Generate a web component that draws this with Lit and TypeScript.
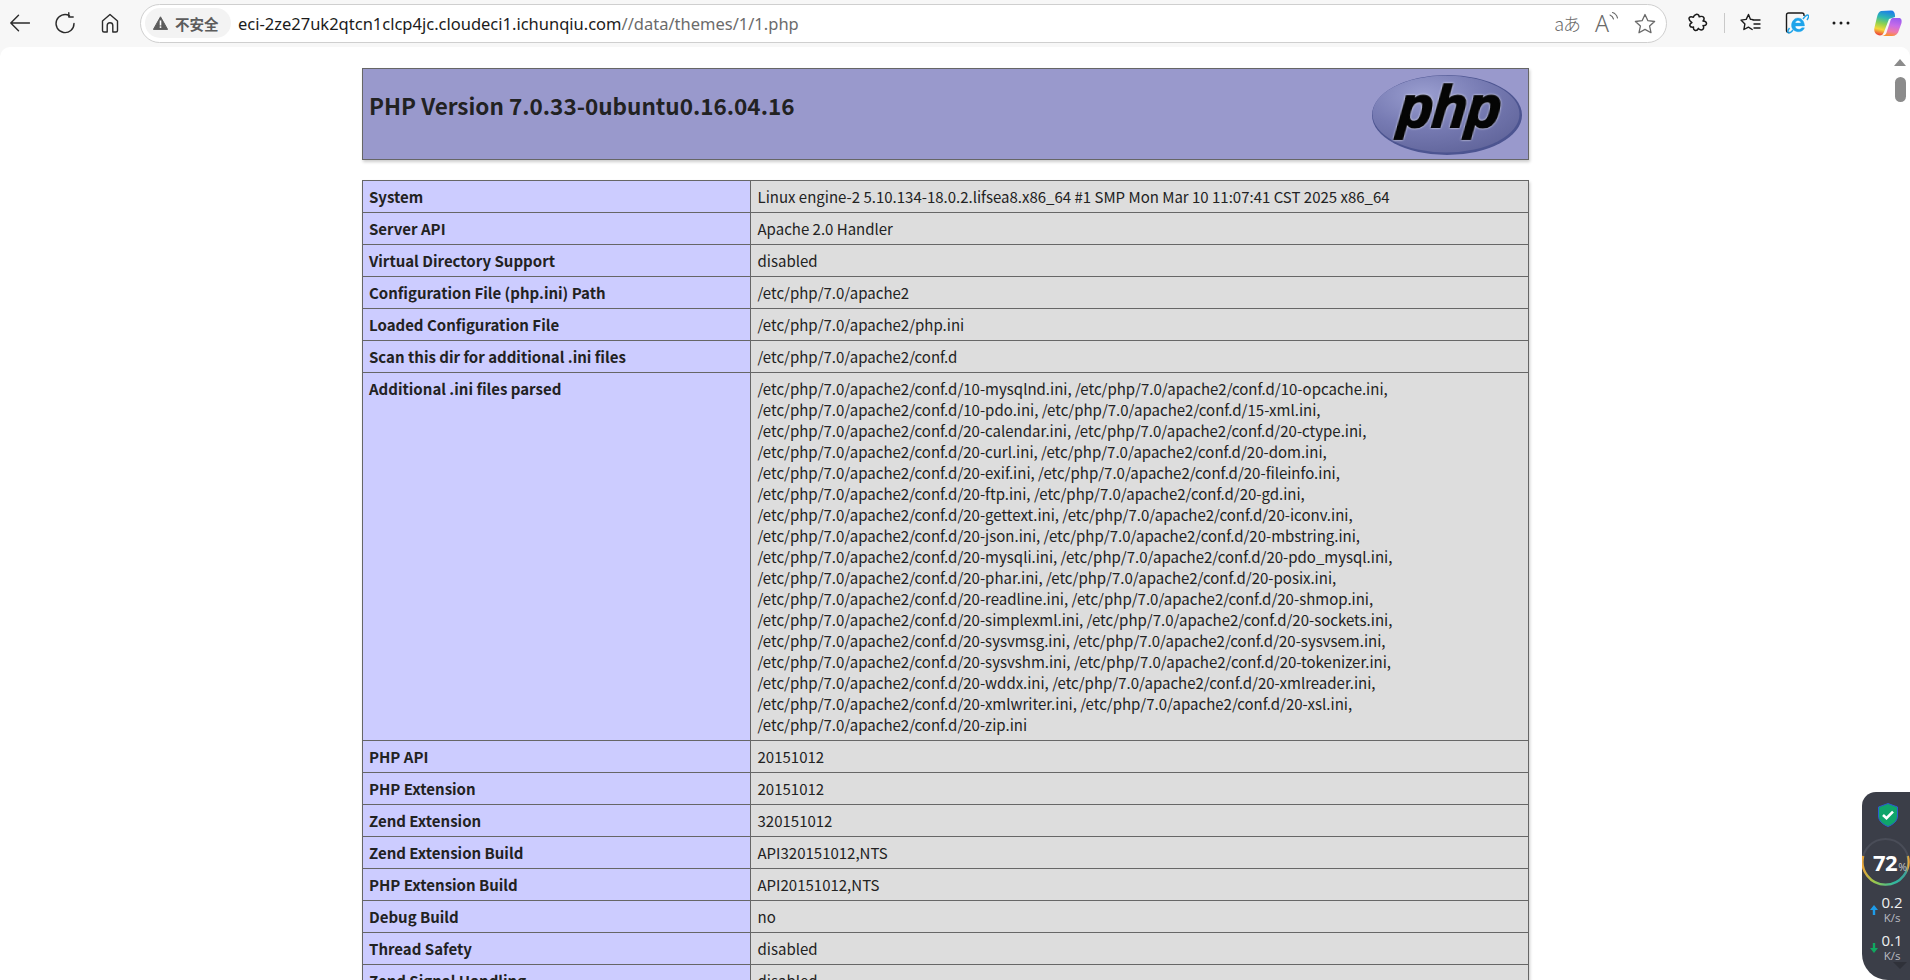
import { LitElement, html, css } from "lit";
import { customElement } from "lit/decorators.js";

const d = "/etc/php/7.0/apache2/conf.d/";
const pairs: string[][] = [
  ["10-mysqlnd", "10-opcache"], ["10-pdo", "15-xml"], ["20-calendar", "20-ctype"], ["20-curl", "20-dom"],
  ["20-exif", "20-fileinfo"], ["20-ftp", "20-gd"], ["20-gettext", "20-iconv"], ["20-json", "20-mbstring"],
  ["20-mysqli", "20-pdo_mysql"], ["20-phar", "20-posix"], ["20-readline", "20-shmop"], ["20-simplexml", "20-sockets"],
  ["20-sysvmsg", "20-sysvsem"], ["20-sysvshm", "20-tokenizer"], ["20-wddx", "20-xmlreader"], ["20-xmlwriter", "20-xsl"],
];
const iniLines = [...pairs.map(([a, b]) => `${d}${a}.ini, ${d}${b}.ini,`), `${d}20-zip.ini`];

const rowsA: [string, string][] = [
  ["System", "Linux engine-2 5.10.134-18.0.2.lifsea8.x86_64 #1 SMP Mon Mar 10 11:07:41 CST 2025 x86_64"],
  ["Server API", "Apache 2.0 Handler"],
  ["Virtual Directory Support", "disabled"],
  ["Configuration File (php.ini) Path", "/etc/php/7.0/apache2"],
  ["Loaded Configuration File", "/etc/php/7.0/apache2/php.ini"],
  ["Scan this dir for additional .ini files", "/etc/php/7.0/apache2/conf.d"],
];
const rowsB: [string, string][] = [
  ["PHP API", "20151012"],
  ["PHP Extension", "20151012"],
  ["Zend Extension", "320151012"],
  ["Zend Extension Build", "API320151012,NTS"],
  ["PHP Extension Build", "API20151012,NTS"],
  ["Debug Build", "no"],
  ["Thread Safety", "disabled"],
  ["Zend Signal Handling", "disabled"],
];

@customElement("app-root")
export class AppRoot extends LitElement {
  static styles = css`
    :host { display: block; width: 1910px; height: 980px; overflow: hidden; position: relative; background: #f7f7f7; }
    .chrome { height: 47px; display: flex; align-items: center; background: #f7f7f7; box-sizing: border-box; padding-bottom: 1px; }
    .nav { display: flex; width: 140px; flex: none; align-items: center; }
    .nav svg { display: block; }
    .nav .b { width: 20px; margin-left: 10px; }
    .nav .r { width: 22px; margin-left: 24px; }
    .nav .h { width: 22px; margin-left: 23px; }
    .addr { width: 1527px; height: 39px; box-sizing: border-box; border: 1px solid #cfcfcf; border-radius: 20px; background: #fff; display: flex; align-items: center; flex: none; padding-left: 4px; }
    .pill { width: 86px; height: 30px; border-radius: 15px; background: #f3f3f3; display: flex; align-items: center; gap: 7px; padding-left: 8px; box-sizing: border-box; font: 700 14.5px "Noto Sans CJK SC", sans-serif; color: #5c5c5c; flex: none; }
    .url { font: 400 16.5px "Noto Sans", sans-serif; margin-left: 7px; color: #1b1b1b; white-space: nowrap; }
    .url span { color: #6b6b6b; }
    .addr-icons { margin-left: auto; display: flex; align-items: center; padding-right: 10px; color: #6a6a6a; }
    .translate { font: 300 18px/24px "Noto Sans CJK JP", sans-serif; letter-spacing: -1px; white-space: nowrap; }
    .aloud { margin-left: 15px; overflow: visible; }
    .aloud text { font: 300 23px "Noto Sans", sans-serif; }
    .fav { margin-left: 13px; }
    .tools { display: flex; align-items: center; flex: 1; }
    .t1 { margin-left: 21px; }
    .sep { width: 1px; height: 20px; background: #c9c9c9; margin: 0 15px 0 16px; }
    .t3 { margin-left: 24px; }
    .t4 { margin-left: 23px; }
    .t5 { margin-left: 24px; }
    .body { height: 933px; display: flex; background: #fff; border-radius: 10px 10px 0 0; overflow: hidden; }
    .page { flex: 1; min-width: 0; padding-top: 21px; font-family: "Noto Sans CJK SC", "Noto Sans", sans-serif; color: #222; }
    .head { width: 1167px; height: 92px; margin: 0 auto 20px; box-sizing: border-box; border: 1px solid #666; background: #99c; box-shadow: 1px 2px 3px #ccc; display: flex; justify-content: space-between; align-items: flex-start; padding: 5px 5px 0 6px; }
    h1 { margin: 0; font-size: 22.5px; line-height: 63px; font-weight: 700; white-space: nowrap; }
    .logo { display: block; }
    .logo text { filter: drop-shadow(0 0 0.8px #f4f4fa); }
    table { width: 1167px; margin: 0 auto; border-collapse: collapse; table-layout: fixed; box-shadow: 1px 2px 3px #ccc; font-size: 15px; line-height: 21px; }
    td { border: 1px solid #666; padding: 5px 6px 5px 6.5px; vertical-align: baseline; background: #ddd; white-space: nowrap; }
    td.e { background: #ccf; font-weight: 700; width: 388px; box-sizing: border-box; padding-left: 6px; }
    .scroll { width: 18px; flex: none; background: #fff; display: flex; flex-direction: column; align-items: center; padding-right: 1px; }
    .arrow { width: 0; height: 0; border-left: 6.5px solid transparent; border-right: 6.5px solid transparent; border-bottom: 7px solid #8b8b8b; margin-top: 12px; }
    .thumb { width: 11px; height: 25px; background: #8b8b8b; border-radius: 6px; margin-top: 11px; }
    .widget { position: absolute; left: 1862px; top: 792px; width: 48px; height: 188px; background: #3b3e48; border-radius: 14px 0 0 26px; color: #fff; font-family: "Open Sans", sans-serif; }
    .shield { position: absolute; left: 16px; top: 11px; }
    .ring { position: absolute; left: 0; top: 43px; }
    .pct { position: absolute; left: 11px; top: 55px; font-size: 22px; font-weight: 700; line-height: 30px; white-space: nowrap; letter-spacing: -0.5px; }
    .pct small { font-size: 10.5px; font-weight: 400; color: #c4c6cc; margin-left: 1px; letter-spacing: 0; }
    .rate { position: absolute; left: 17px; font-size: 15px; line-height: 17px; text-align: center; width: 26px; color: #f0f0f0; }
    .rate small { display: block; font-size: 11.5px; line-height: 12px; color: #b9bbc2; margin-top: 1px; }
    .up { top: 102px; }
    .down { top: 140px; }
    .arr { position: absolute; left: 8px; }
    .arr.a1 { top: 113px; }
    .arr.a2 { top: 151px; }
    .tri { position: absolute; left: 31px; top: 170px; width: 0; height: 0; border-left: 7.5px solid transparent; border-right: 7.5px solid transparent; border-top: 7px solid #2f3139; }
  `;

  private logo() {
    return html`<svg class="logo" width="152" height="82" viewBox="0 0 152 82">
      <defs>
        <radialGradient id="lg" cx="0.35" cy="0.25" r="0.85">
          <stop offset="0" stop-color="#9a9ed0" />
          <stop offset="0.5" stop-color="#777bb3" />
          <stop offset="1" stop-color="#5f6399" />
        </radialGradient>
      </defs>
      <ellipse cx="76" cy="41" rx="75" ry="40" fill="#4c5490" />
      <ellipse cx="75" cy="40" rx="73.500" ry="38.500" fill="url(#lg)" />
      <text transform="translate(26 53) skewX(-6)" textLength="102" lengthAdjust="spacingAndGlyphs" font-family="Liberation Sans" font-weight="700" font-style="italic" font-size="58" fill="#050505" stroke="#050505" stroke-width="2.200">php</text>
    </svg>`;
  }

  render() {
    const row = ([k, v]: [string, string]) => html`<tr><td class="e">${k}</td><td>${v}</td></tr>`;
    const stroke = "#2b2b2b";
    return html`
      <div class="chrome">
        <div class="nav">
          <svg class="b" viewBox="0 0 20 20" height="20" fill="none" stroke="${stroke}" stroke-width="1.400" stroke-linecap="round" stroke-linejoin="round"><path d="M19.500 10H.8M8.500 2.200.8 10l7.700 7.800" /></svg>
          <svg class="r" viewBox="0 0 22 22" height="22" fill="none" stroke="${stroke}" stroke-width="1.400" stroke-linecap="round" stroke-linejoin="round"><path d="M15.500 3.800A9 9 0 1 0 20 11.500" /><path d="M14.800 0.800v4.200h4.400" /></svg>
          <svg class="h" viewBox="0 0 22 22" height="22" fill="none" stroke="${stroke}" stroke-width="1.400" stroke-linejoin="round"><path d="M11 2.500 3.500 9v9.500a1.500 1.500 0 0 0 1.500 1.500h3.200v-6.500a2.800 2.800 0 0 1 5.600 0V20H17a1.500 1.500 0 0 0 1.500-1.500V9z" /></svg>
        </div>
        <div class="addr">
          <div class="pill">
            <svg width="15" height="14" viewBox="0 0 15 14"><path d="M7.500 0.800 14.600 13.400H.4z" fill="#5c5c5c" stroke="#5c5c5c" stroke-linejoin="round" /><rect x="6.700" y="4.500" width="1.600" height="5" fill="#fff" /><rect x="6.700" y="10.300" width="1.600" height="1.600" fill="#fff" /></svg>
            不安全
          </div>
          <div class="url">eci-2ze27uk2qtcn1clcp4jc.cloudeci1.ichunqiu.com<span>//data/themes/1/1.php</span></div>
          <div class="addr-icons">
            <div class="translate">aあ</div>
            <svg class="aloud" width="26" height="26" viewBox="0 0 26 26" fill="none" stroke="#6a6a6a" stroke-width="1.100" stroke-linecap="round"><text x="0" y="22" fill="#6a6a6a" stroke="none">A</text><path d="M15 5c1.800.7 3 2 3.500 4M17.500 2.500c2.500.8 4.300 2.800 5 5.500" /></svg>
            <svg class="fav" width="22" height="21" viewBox="0 0 22 21" fill="none" stroke="#6a6a6a" stroke-width="1.300" stroke-linejoin="round"><path d="M11 1.500l2.900 6.200 6.700.8-5 4.600 1.400 6.600L11 16.400l-6 3.300 1.400-6.600-5-4.600 6.700-.8z" /></svg>
          </div>
        </div>
        <div class="tools">
          <svg class="t1" width="20" height="20" viewBox="0 0 20 20" fill="none" stroke="#1b1b1b" stroke-width="1.500" stroke-linejoin="round"><path d="M8 1.500c1.500-.6 3 .4 3.200 2.300 1.800-.8 4-.4 4.600.8.600 1.300 0 2.600-.8 3.400 2 .2 3.600 1.400 3.500 2.800-.1 1.400-1.800 2-3.500 1.800.8 1 1 2.900-.2 3.800-1.300 1-3.600.3-4.400-1-.7 1.500-2.300 2.400-3.600 1.900-1.300-.5-1.500-2-1.300-3.200-1.600.3-3.400-.2-3.700-1.600-.3-1.500 1.100-2.400 2.100-3C1.500 7.800.6 6 1.300 4.700c.8-1.200 2.800-1 4.100-.4.300-1.100 1.200-2.300 2.600-2.800z" /></svg>
          <div class="sep"></div>
          <svg width="21" height="20" viewBox="0 0 21 20" fill="none" stroke="#1b1b1b" stroke-width="1.400" stroke-linejoin="round" stroke-linecap="round"><path d="M13 6.600 10.400 6.300 8.500 1.500 6.200 6.400l-5.200.7 3.900 3.800-1 5.600 4.500-2.400 3.800 2.400" /><path d="M13 7h7M14 11h6M14 15h6" /></svg>
          <svg class="t3" width="24" height="24" viewBox="0 0 24 24" fill="none">
            <path d="M4.500 21.500H3.500A2 2 0 0 1 1.500 19.500V4A2 2 0 0 1 3.500 2H17a2 2 0 0 1 2 2v1" stroke="#1b1b1b" stroke-width="1.400" />
            <circle cx="13" cy="14" r="7.500" fill="#fff" />
            <path d="M6.500 14.500c0-4.300 3-7.500 6.500-7.500s6.500 3 6.500 8H10.200c.2 2.300 1.800 3.300 3.600 3.300 1.500 0 2.500-.6 3-1.500h2.700c-.9 2.600-3.300 4-5.700 4-4.200 0-7.300-2.500-7.300-6.300zm3.700-2.500h5.800c-.2-1.500-1.500-2.500-3-2.500s-2.500 1-2.800 2.500z" fill="#1ea4ea" stroke="#1ea4ea" stroke-width=".4" />
            <path d="M18 8c2-3 4.500-5 5.500-3.500.5 1-.5 3-1.500 4.500M8 19c-2 2.500-4 3.500-5 2.500-.6-.8 0-2.500 1.500-4.500" stroke="#1ea4ea" stroke-width="1.400" />
          </svg>
          <svg class="t5b t4" width="18" height="6" viewBox="0 0 18 6" fill="#1b1b1b"><circle cx="2" cy="3" r="1.500" /><circle cx="9" cy="3" r="1.500" /><circle cx="16" cy="3" r="1.500" /></svg>
          <svg class="t5" width="28" height="26" viewBox="0 0 28 26">
            <defs>
              <linearGradient id="c1" x1="0.6" y1="0" x2="0.4" y2="1"><stop offset="0" stop-color="#1c7fe8" /><stop offset="0.3" stop-color="#2fb8b0" /><stop offset="0.55" stop-color="#8fd14f" /><stop offset="0.78" stop-color="#f4d83a" /><stop offset="1" stop-color="#ee4a3a" /></linearGradient>
              <linearGradient id="c2" x1="0.6" y1="0" x2="0.4" y2="1"><stop offset="0" stop-color="#9a5cf0" /><stop offset="0.4" stop-color="#c86ce8" /><stop offset="0.75" stop-color="#f07aa8" /><stop offset="1" stop-color="#f8902e" /></linearGradient>
            </defs>
            <path d="M7 1 17 .5c3 0 4.300 2.500 4 6.500l-6 2-5 13c-1 2.500-2 3.500-4 3.500-4.500-.5-6.500-4-5.500-8L3 7C3.800 3.500 5 1.500 7 1z" fill="url(#c1)" />
            <path d="M19 8h6c2.500 0 3 2.500 2.500 5L25 20c-1 4-3.500 6-7 6H8c3-.5 4.500-2 5-5l3-9c.5-2.500 1.500-4 3-4z" fill="url(#c2)" />
          </svg>
        </div>
      </div>
      <div class="body">
        <div class="page">
          <div class="head">
            <h1>PHP Version 7.0.33-0ubuntu0.16.04.16</h1>
            ${this.logo()}
          </div>
          <table>
            ${rowsA.map(row)}
            <tr><td class="e">Additional .ini files parsed</td><td>${iniLines.map((l) => html`${l}<br />`)}</td></tr>
            ${rowsB.map(row)}
          </table>
        </div>
        <div class="scroll"><div class="arrow"></div><div class="thumb"></div></div>
      </div>
      <div class="widget">
        <svg class="shield" width="20" height="24" viewBox="0 0 20 24"><path d="M10 .5 19.500 4v9c0 5-4.500 8.500-9.500 10.500C5 21.500.5 18 .5 13V4z" fill="#10a56b" stroke="#2d5bd0" stroke-width="1" /><path d="M5 12l3.500 3.200 6.500-6.500" fill="none" stroke="#fff" stroke-width="2.600" /></svg>
        <svg class="ring" width="48" height="54" viewBox="0 0 48 54" fill="none">
          <defs><linearGradient id="rg" x1="0" y1="0" x2="1" y2="0"><stop offset="0" stop-color="#e8a33a" /><stop offset="0.25" stop-color="#9cc84a" /><stop offset="0.7" stop-color="#2fb8a0" /><stop offset="0.95" stop-color="#3f9f98" /><stop offset="1" stop-color="#e8a33a" /></linearGradient></defs>
          <circle cx="23.500" cy="27" r="23" stroke="#4a4d58" stroke-width="2" />
          <path d="M1.200 21A23 23 0 1 0 45.800 21" stroke="url(#rg)" stroke-width="2.400" />
        </svg>
        <div class="pct">72<small>%</small></div>
        <svg class="arr a1" width="8" height="10" viewBox="0 0 8 10"><path d="M4 0 8 5H5.200v5H2.800V5H0z" fill="#1e9be8" /></svg>
        <div class="rate up">0.2<small>K/s</small></div>
        <svg class="arr a2" width="8" height="10" viewBox="0 0 8 10"><path d="M4 10 8 5H5.200V0H2.800V5H0z" fill="#10a860" /></svg>
        <div class="rate down">0.1<small>K/s</small></div>
        <div class="tri"></div>
      </div>
    `;
  }
}
